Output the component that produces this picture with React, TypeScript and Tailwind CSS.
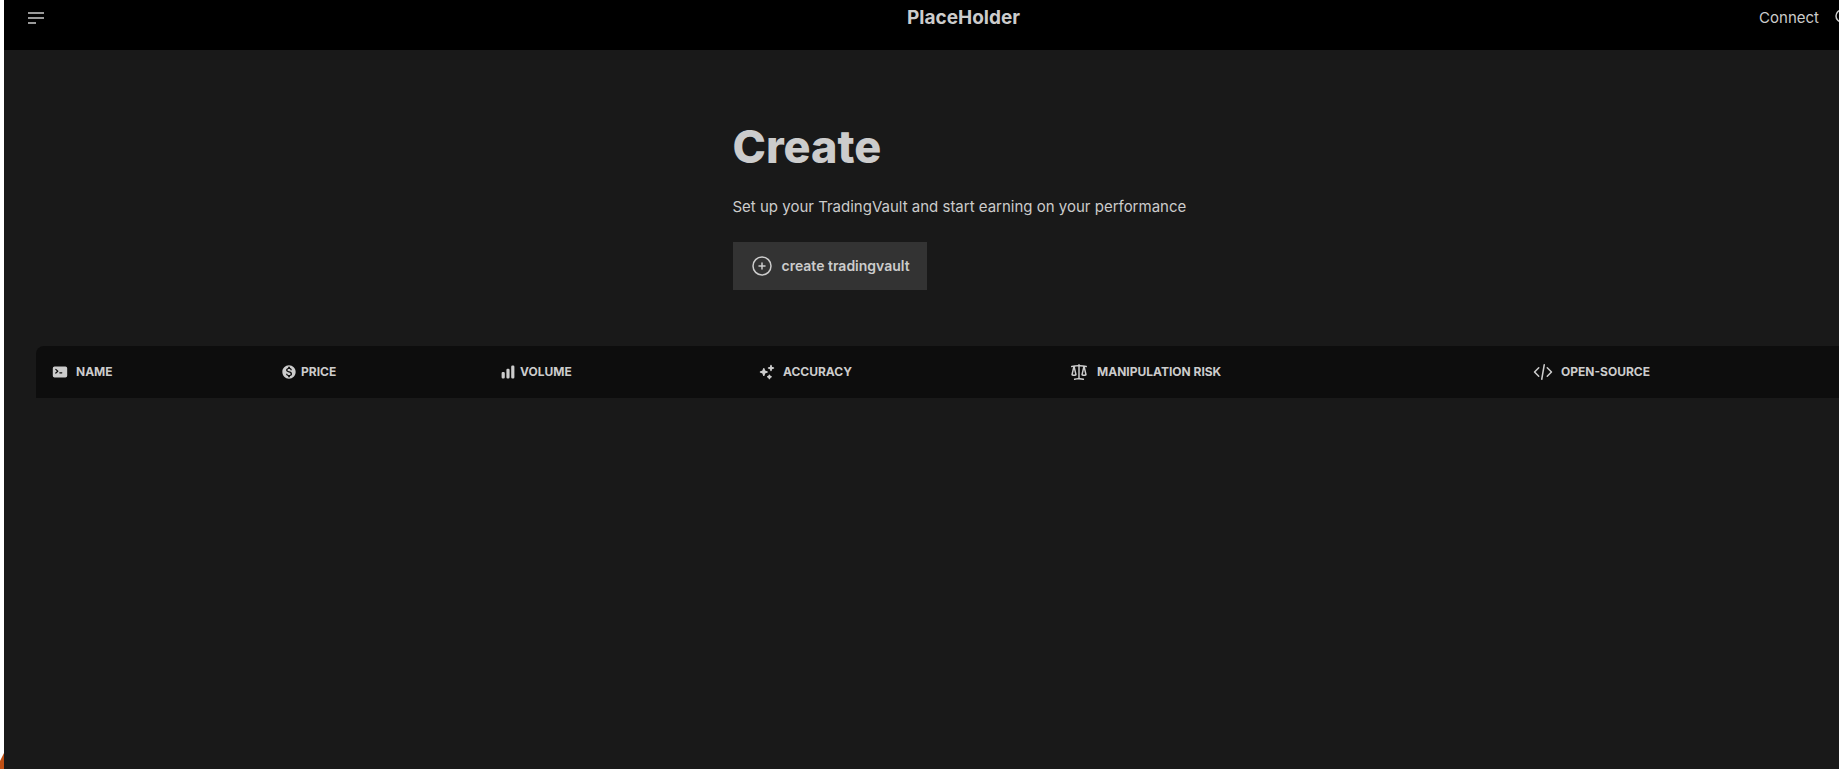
import type { ReactNode } from "react";
import { MdMonetizationOn } from "react-icons/md";
import {
  HiMiniChartBar,
  HiMiniCodeBracket,
  HiMiniCommandLine,
  HiMiniScale,
  HiMiniSparkles,
  HiOutlinePlusCircle,
} from "react-icons/hi2";

type Column = {
  label: string;
  icon: ReactNode;
  width: string;
  gap: string;
};

const columns: Column[] = [
  {
    label: "Name",
    icon: <HiMiniCommandLine className="size-4" />,
    width: "w-[229px]",
    gap: "gap-2",
  },
  {
    label: "Price",
    icon: <MdMonetizationOn className="size-4" />,
    width: "w-[219px]",
    gap: "gap-1",
  },
  {
    label: "Volume",
    icon: <HiMiniChartBar className="size-4" />,
    width: "w-[259px]",
    gap: "gap-1",
  },
  {
    label: "Accuracy",
    icon: <HiMiniSparkles className="size-4" />,
    width: "w-[310px]",
    gap: "gap-2",
  },
  {
    label: "Manipulation Risk",
    icon: <HiMiniScale className="size-5" />,
    width: "w-[464px]",
    gap: "gap-2",
  },
  {
    label: "Open-Source",
    icon: <HiMiniCodeBracket className="size-5" />,
    width: "w-[400px]",
    gap: "gap-2",
  },
];

function Navbar() {
  return (
    <header className="h-[50px] bg-black">
      <nav className="grid h-9 grid-cols-[1fr_auto_1fr] items-center">
        <div className="pl-5">
          <button type="button" aria-label="Open menu" className="block">
            <svg
              className="size-5"
              viewBox="0 0 20 20"
              fill="none"
              stroke="currentColor"
              strokeWidth="1.5"
            >
              <path d="M4 5h16M4 10h16M4 15h8" />
            </svg>
          </button>
        </div>
        <a href="#" className="text-[19px] leading-7 font-bold">
          PlaceHolder
        </a>
        <div className="flex items-center justify-end gap-4 pr-17">
          <a href="#" className="text-[15px] leading-6">
            Connect
          </a>
          <button type="button" aria-label="Search" className="block">
            <svg
              className="size-5"
              viewBox="0 0 20 20"
              fill="none"
              stroke="currentColor"
              strokeWidth="1.5"
            >
              <circle cx="7" cy="8" r="6" />
              <path d="M11 12l6 6" />
            </svg>
          </button>
        </div>
      </nav>
    </header>
  );
}

function Hero() {
  return (
    <section className="flex justify-center pt-[73px] pb-14">
      <div className="w-[462px] max-w-full">
        <h1 className="text-[45px] leading-12 font-extrabold">Create</h1>
        <p className="pt-6 pb-[23px] text-[15px] leading-6">
          Set up your TradingVault and start earning on your performance
        </p>
        <button
          type="button"
          className="flex h-12 items-center gap-2 bg-[#333333] px-[17px] text-sm font-semibold"
        >
          <HiOutlinePlusCircle className="size-6" />
          create tradingvault
        </button>
      </div>
    </section>
  );
}

function VaultTable() {
  return (
    <div className="pl-8">
      <table className="w-[1881px] table-fixed text-left">
        <thead>
          <tr>
            {columns.map((column) => (
              <th
                key={column.label}
                scope="col"
                className={`${column.width} h-[52px] bg-[#0d0d0d] px-4 text-xs font-bold uppercase first:rounded-tl-lg`}
              >
                <div className={`flex items-center ${column.gap}`}>
                  {column.icon}
                  {column.label}
                </div>
              </th>
            ))}
          </tr>
        </thead>
      </table>
    </div>
  );
}

export default function App() {
  return (
    <div className="flex min-h-screen overflow-hidden bg-[#191919] font-['Inter','Liberation_Sans',sans-serif] text-[#cccccc]">
      <div className="flex w-1 shrink-0 flex-col justify-end bg-white">
        <div className="h-4 bg-[#bf4f14] [clip-path:polygon(100%_0,100%_100%,0_100%,0_50%)]" />
      </div>
      {/* content runs past the right edge of the window */}
      <div className="-mr-21 min-w-0 flex-1">
        <Navbar />
        <main>
          <Hero />
          <VaultTable />
        </main>
      </div>
    </div>
  );
}
